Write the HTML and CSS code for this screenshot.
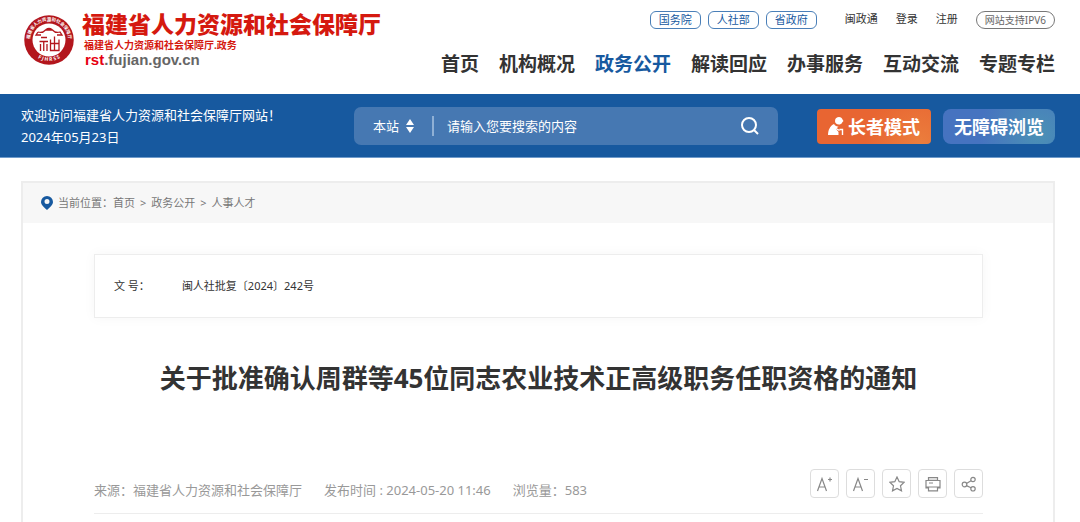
FILE: index.html
```
<!DOCTYPE html>
<html lang="zh-CN">
<head>
    <meta charset="UTF-8">
    <meta name="viewport" content="width=device-width, initial-scale=1.0">
    <title>福建省人力资源和社会保障厅</title>
    <link rel="stylesheet" href="styles.css">
</head>
<body>

    <!-- Header -->
    <header class="header wrap">
        <a class="logo" href="#">
            <svg class="logo-seal" viewBox="0 0 100 100" aria-hidden="true">
                <defs>
                    <path id="arc-top" d="M14.500 65 A38.500 38.500 0 1 1 85.500 65"/>
                    <path id="arc-bottom" d="M9 62 A43 43 0 0 0 91 62"/>
                </defs>
                <circle cx="50" cy="50" r="49.500" fill="#b3161d"/>
                <circle cx="50" cy="50" r="33" fill="#fff"/>
                <text class="seal-top"><textPath href="#arc-top" startOffset="50%">福建省人力资源和社会保障厅</textPath></text>
                <text class="seal-bottom"><textPath href="#arc-bottom" startOffset="50%">F J H R S S</textPath></text>
                <g fill="none" stroke="#b3161d" stroke-width="2.600">
                    <path d="M44 29 Q50 25 56 29 M28 34 Q37 37 43 30 H57 Q63 37 72 34 L76 40 H66 M28 34 L24 40 H34"/>
                    <path d="M34 45 H46 M31 53 H48 M39.500 53 V72 M33 58 V72 M46 58 V72"/>
                    <path d="M61 43 V71 M53 49 V71 H70 V49 M53 57 H70"/>
                </g>
            </svg>
            <span class="logo-text">
                <strong class="logo-name">福建省人力资源和社会保障厅</strong>
                <span class="logo-sub">福建省人力资源和社会保障厅.政务</span>
                <span class="logo-url"><em>rst</em>.fujian.gov.cn</span>
            </span>
        </a>

        <div class="header-right">
            <div class="top-links">
                <a class="pill" href="#">国务院</a>
                <a class="pill" href="#">人社部</a>
                <a class="pill" href="#">省政府</a>
                <a class="top-link first" href="#">闽政通</a>
                <a class="top-link" href="#">登录</a>
                <a class="top-link register" href="#">注册</a>
                <a class="pill ipv6" href="#">网站支持IPV6</a>
            </div>
            <nav class="nav">
                <a href="#">首页</a>
                <a href="#">机构概况</a>
                <a class="active" href="#">政务公开</a>
                <a href="#">解读回应</a>
                <a href="#">办事服务</a>
                <a href="#">互动交流</a>
                <a href="#">专题专栏</a>
            </nav>
        </div>
    </header>

    <!-- Search bar -->
    <div class="banner">
        <div class="banner-inner wrap">
            <div class="welcome">
                <p>欢迎访问福建省人力资源和社会保障厅网站！</p>
                <p>2024年05月23日</p>
            </div>
            <form class="search">
                <div class="scope">
                    <select aria-label="搜索范围">
                        <option>本站</option>
                    </select>
                    <svg viewBox="0 0 8 14" aria-hidden="true"><path d="M4 0 L8 6 H0 Z M0 8 H8 L4 14 Z" fill="#fff"/></svg>
                </div>
                <input type="text" placeholder="请输入您要搜索的内容" aria-label="搜索内容">
                <button type="submit" aria-label="搜索">
                    <svg viewBox="0 0 18 18" aria-hidden="true"><circle cx="8" cy="8" r="7" /><path d="M13 13 L17 17"/></svg>
                </button>
            </form>
            <div class="modes">
                <button class="mode elder" type="button">
                    <svg viewBox="0 0 16 18" aria-hidden="true">
                        <path d="M7 4 C7 1 9 0 11 0 C13 0 14 1 14.500 2.500 L15.500 4 C14 5 14 7.500 11 7.500 C8.500 7.500 7 6 7 4 Z" fill="#fff"/>
                        <path d="M0 18 C0 13 2 9 6 7 C7 9 9 9.500 10.500 9.500 L8 12 L10.500 15 V18 Z" fill="#fff"/>
                        <path d="M8 11.500 L11.500 13.500 M11.500 12.500 H14.500 V18" fill="none" stroke="#fff" stroke-width="1.400"/>
                    </svg>
                    长者模式
                </button>
                <button class="mode barrier" type="button">无障碍浏览</button>
            </div>
        </div>
    </div>

    <!-- Article -->
    <main class="card">
        <nav class="breadcrumb">
            <svg viewBox="0 0 12 14" aria-hidden="true"><path d="M6 0 A6 6 0 0 0 0 6 C0 9 3 11 6 14 C9 11 12 9 12 6 A6 6 0 0 0 6 0 Z M6 3 A2.500 2.500 0 1 1 6 8 A2.500 2.500 0 1 1 6 3 Z" fill="#17599f" fill-rule="evenodd"/></svg>
            <span>当前位置：<a href="#">首页</a></span>
            <span>&gt;</span>
            <a href="#">政务公开</a>
            <span>&gt;</span>
            <a href="#">人事人才</a>
        </nav>

        <article class="article">
            <dl class="doc-info">
                <dt>文 号：</dt>
                <dd>闽人社批复〔2024〕242号</dd>
            </dl>

            <h1>关于批准确认周群等45位同志农业技术正高级职务任职资格的通知</h1>

            <div class="meta">
                <span>来源：福建省人力资源和社会保障厅</span>
                <span>发布时间 : 2024-05-20 11:46</span>
                <span>浏览量：583</span>
                <div class="tools">
                    <button type="button" aria-label="放大字体">
                        <svg viewBox="0 0 16 16"><path d="M0.500 15 L5 2.500 L9.500 15 M2 11 H8 M11 3.500 H15 M13 1.500 V5.500"/></svg>
                    </button>
                    <button type="button" aria-label="缩小字体">
                        <svg viewBox="0 0 16 16"><path d="M0.500 15 L5 2.500 L9.500 15 M2 11 H8 M11 3.500 H15"/></svg>
                    </button>
                    <button type="button" aria-label="收藏">
                        <svg viewBox="0 0 16 16"><path d="M8 1 L10.200 5.700 L15.200 6.300 L11.500 9.800 L12.500 14.800 L8 12.400 L3.500 14.800 L4.500 9.800 L0.800 6.300 L5.800 5.700 Z"/></svg>
                    </button>
                    <button type="button" aria-label="打印">
                        <svg viewBox="0 0 16 16"><path d="M3.500 4.500 V1.500 H12.500 V4.500" fill="#ddd"/><path d="M3.500 12 H1 V4.500 H15 V12 H12.500 M1 11 H15 M3.500 11 V14.800 H12.500 V11 M4 7 H8"/></svg>
                    </button>
                    <button type="button" aria-label="分享">
                        <svg viewBox="0 0 16 16"><circle cx="3.500" cy="8.500" r="2.300"/><circle cx="12" cy="3.500" r="2.200"/><circle cx="12" cy="12.800" r="2.200"/><path d="M5.500 7.400 L10 4.700 M5.500 9.600 L10 11.800"/></svg>
                    </button>
                </div>
            </div>
        </article>
    </main>

</body>
</html>
```

FILE: styles.css
```
/* Basic Styling */
* {
    box-sizing: border-box;
}

body {
    font-family: "Noto Sans", "Noto Sans CJK SC", sans-serif;
    font-size: 13px;
    color: #333;
    background-color: #fff;
    margin: 0;
    min-height: 100vh;
    display: flex;
    flex-direction: column;
}

a {
    color: inherit;
    text-decoration: none;
}

p, h1, dl, dd {
    margin: 0;
}

button, input, select {
    font: inherit;
    color: inherit;
    background: none;
    border: 0;
    padding: 0;
}

button {
    cursor: pointer;
}

.wrap {
    margin: 0 25px 0 21px;
}

/* Header */
.header {
    display: flex;
    justify-content: space-between;
    padding: 11px 0 15px;
}

.logo {
    display: flex;
    gap: 8px;
    padding-left: 3px;
}

.logo-seal {
    width: 50px;
    height: 50px;
    margin-top: 4px;
}

.seal-top,
.seal-bottom {
    fill: #fff;
    font-size: 9px;
    font-weight: bold;
    text-anchor: middle;
}

.seal-bottom {
    font-size: 10px;
}

.logo-text {
    display: flex;
    flex-direction: column;
    white-space: nowrap;
}

.logo-name {
    font-size: 23px;
    font-weight: 900;
    line-height: 26px;
    color: #d5190f;
}

.logo-sub {
    padding-left: 2px;
    font-size: 10px;
    font-weight: bold;
    line-height: 16px;
    color: #d5190f;
}

.logo-url {
    padding-left: 3px;
    font-family: "Liberation Sans", sans-serif;
    font-size: 15px;
    font-weight: bold;
    line-height: 14px;
    color: #666;
}

.logo-url em {
    font-style: normal;
    color: #e60012;
}

.header-right {
    display: flex;
    flex-direction: column;
    align-items: flex-end;
    gap: 20px;
}

.top-links {
    display: flex;
    font-size: 11px;
    line-height: 16px;
}

.pill {
    margin-right: 7px;
    padding: 0 8px;
    border: 1px solid #4a7fb8;
    border-radius: 6px;
    color: #17599f;
}

.top-link {
    margin-right: 18px;
}

.top-link.first {
    margin-left: 21px;
}

.pill.ipv6 {
    margin-right: 0;
    border-color: #777;
    border-radius: 9px;
    font-size: 10px;
    color: #666;
}

.nav {
    display: flex;
    gap: 20px;
    font-size: 19px;
    font-weight: bold;
    line-height: 30px;
}

.nav .active {
    color: #17599f;
}

/* Search bar */
.banner {
    background-color: #17599f;
    border-bottom: 1px solid #6f9bcb;
    color: #fff;
}

.banner-inner {
    display: flex;
    align-items: center;
    padding: 10px 0 9px;
}

.welcome {
    line-height: 22px;
}

.search {
    display: flex;
    align-items: center;
    width: 41%;
    height: 38px;
    margin: 0 39px 0 auto;
    border-radius: 7px;
    background-color: #4678b2;
}

.scope {
    display: flex;
    align-items: center;
    gap: 6px;
    margin-left: 19px;
    padding-right: 18px;
    border-right: 2px solid #8fb0d5;
}

.scope select {
    appearance: none;
    line-height: 20px;
}

.scope svg {
    width: 8px;
    height: 14px;
}

.search input {
    flex: 1;
    min-width: 0;
    padding-left: 13px;
    outline: none;
}

.search input::placeholder {
    color: #fff;
}

.search button {
    height: 18px;
    margin-right: 19px;
}

.search button svg {
    width: 18px;
    height: 18px;
    fill: none;
    stroke: #fff;
    stroke-width: 2;
}

.modes {
    display: flex;
    gap: 12px;
}

.mode {
    display: flex;
    align-items: center;
    gap: 4px;
    height: 35px;
    padding: 0 11px;
    font-size: 18px;
    font-weight: bold;
    white-space: nowrap;
}

.mode svg {
    width: 16px;
    height: 18px;
}

.elder {
    border-radius: 4px;
    background: radial-gradient(circle at 90% 100%, #eb7e3d, #e86532 50%);
}

.barrier {
    border-radius: 8px;
    background: radial-gradient(circle at 85% 70%, #4b91b5, #4673c0 60%);
}

/* Article */
.card {
    flex: 1;
    margin: 23px 25px 0 21px;
    border: 2px solid #ededed;
    border-bottom: 0;
}

.breadcrumb {
    display: flex;
    align-items: center;
    gap: 5px;
    padding: 10px 18px;
    background-color: #f7f7f7;
    font-size: 11px;
    line-height: 20px;
    color: #777;
}

.breadcrumb svg {
    width: 12px;
    height: 14px;
}

.article {
    padding: 31px 70px 0 71px;
}

.doc-info {
    display: flex;
    gap: 32px;
    padding: 20px 19px;
    border: 1px solid #ededed;
    box-shadow: 0 0 12px rgba(0, 0, 0, 0.04);
    font-size: 11px;
    line-height: 22px;
}

.article h1 {
    margin: 41px 0 72px;
    font-size: 26px;
    line-height: 38px;
    text-align: center;
}

.meta {
    display: flex;
    align-items: flex-end;
    gap: 22px;
    padding-bottom: 15px;
    border-bottom: 1px solid #ededed;
    line-height: 16px;
    color: #999;
}

.tools {
    display: flex;
    gap: 7px;
    margin-left: auto;
}

.tools button {
    display: flex;
    align-items: center;
    justify-content: center;
    width: 29px;
    height: 29px;
    border: 1px solid #ddd;
    border-radius: 4px;
}

.tools svg {
    width: 16px;
    height: 16px;
    fill: none;
    stroke: #888;
    stroke-width: 1.2;
}
```
